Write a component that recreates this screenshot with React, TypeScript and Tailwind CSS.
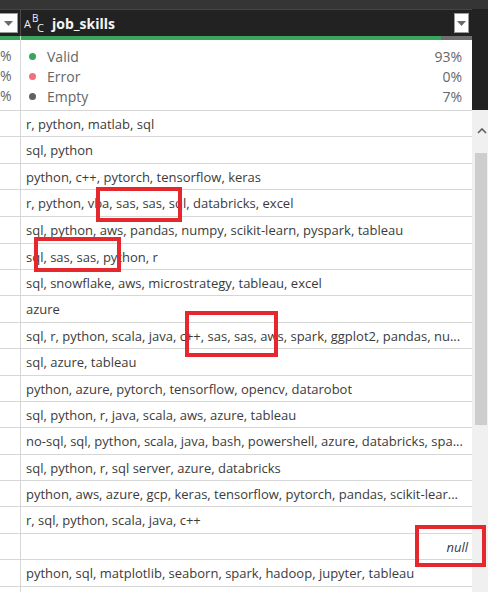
import React from "react";

type Row = { text: string; h: string; isNull?: boolean };

const rows: Row[] = [
  { text: "r, python, matlab, sql", h: "h-[26px]" },
  { text: "sql, python", h: "h-[27px]" },
  { text: "python, c++, pytorch, tensorflow, keras", h: "h-[26px]" },
  { text: "r, python, vba, sas, sas, sql, databricks, excel", h: "h-[27px]" },
  { text: "sql, python, aws, pandas, numpy, scikit-learn, pyspark, tableau", h: "h-[27px]" },
  { text: "sql, sas, sas, python, r", h: "h-[26px]" },
  { text: "sql, snowflake, aws, microstrategy, tableau, excel", h: "h-[26px]" },
  { text: "azure", h: "h-[27px]" },
  { text: "sql, r, python, scala, java, c++, sas, sas, aws, spark, ggplot2, pandas, nu...", h: "h-[26px]" },
  { text: "sql, azure, tableau", h: "h-[27px]" },
  { text: "python, azure, pytorch, tensorflow, opencv, datarobot", h: "h-[26px]" },
  { text: "sql, python, r, java, scala, aws, azure, tableau", h: "h-[26px]" },
  { text: "no-sql, sql, python, scala, java, bash, powershell, azure, databricks, spa...", h: "h-[27px]" },
  { text: "sql, python, r, sql server, azure, databricks", h: "h-[26px]" },
  { text: "python, aws, azure, gcp, keras, tensorflow, pytorch, pandas, scikit-lear...", h: "h-[26px]" },
  { text: "r, sql, python, scala, java, c++", h: "h-[27px]" },
  { text: "", h: "h-[26px]", isNull: true },
  { text: "python, sql, matplotlib, seaborn, spark, hadoop, jupyter, tableau", h: "h-[27px]" },
  { text: "", h: "h-[27px]" },
];

const quality = [
  { label: "Valid", pct: "93%", dot: "bg-[#3aa55d]" },
  { label: "Error", pct: "0%", dot: "bg-[#f0707b]" },
  { label: "Empty", pct: "7%", dot: "bg-[#606060]" },
];

const DropdownBox = ({ className }: { className: string }) => (
  <div
    className={`flex shrink-0 items-center justify-center border border-[#9a9a9a] bg-white ${className}`}
  >
    <svg width="9" height="5" viewBox="0 0 9 5">
      <path d="M0 0h9L4.5 5z" fill="#6a6a6a" />
    </svg>
  </div>
);

const TypeIcon = () => (
  <div className="relative h-[20px] w-[20px] shrink-0 font-['Open_Sans',sans-serif] leading-none text-[#f2f2f2]">
    <span className="absolute left-0 top-[5px] text-[11px]">A</span>
    <span className="absolute left-[8px] top-0 text-[10px]">B</span>
    <span className="absolute left-[13px] top-[9px] text-[11px]">C</span>
  </div>
);

const RedBox = ({ className }: { className: string }) => (
  <div className={`pointer-events-none absolute border-[4px] border-[#e5282d] ${className}`} />
);

export default function App() {
  return (
    <div className="relative h-[592px] w-[488px] overflow-hidden bg-white font-['Open_Sans',sans-serif]">
      <div className="h-[9px] bg-[#353535]" />
      <div className="flex h-[583px] overflow-hidden">
        <div className="flex w-[472px] shrink-0 flex-col">
          {/* column headers */}
          <div className="flex h-[27px] shrink-0 border-t border-[#454545] bg-[#222222]">
            <div className="flex w-[21px] shrink-0 items-center border-r border-[#4a4a4a]">
              <DropdownBox className="-ml-px h-[20px] w-[19px]" />
            </div>
            <div className="flex flex-1 items-center pl-[3px] pr-[3px]">
              <TypeIcon />
              <span className="ml-[8px] text-[14px] font-bold text-[#f5f5f5]">
                job_skills
              </span>
              <DropdownBox className="ml-auto h-[20px] w-[15px]" />
            </div>
          </div>
          <div className="flex h-[4px] shrink-0">
            <div className="w-[20px] bg-[#3aa55d]" />
            <div className="w-px bg-[#d6d6d6]" />
            <div className="w-[420px] bg-[#3aa55d]" />
            <div className="flex-1 bg-[#6e6e6e]" />
          </div>
          {/* quality */}
          <div className="flex h-[71px] shrink-0 border-b border-[#d6d6d6] text-[14px] text-[#666666]">
            <div className="flex w-[21px] shrink-0 flex-col border-r border-[#d6d6d6] pt-[6px]">
              {quality.map((q) => (
                <div key={q.label} className="h-[20px] leading-[20px]">
                  %
                </div>
              ))}
            </div>
            <div className="flex flex-1 flex-col pl-[8px] pr-[10px] pt-[6px]">
              {quality.map((q) => (
                <div key={q.label} className="flex h-[20px] items-center">
                  <span className={`h-[7px] w-[7px] rounded-full ${q.dot}`} />
                  <span className="ml-[11px]">{q.label}</span>
                  <span className="ml-auto">{q.pct}</span>
                </div>
              ))}
            </div>
          </div>
          {/* rows */}
          {rows.map((r, i) => (
            <div key={i} className={`flex shrink-0 border-b border-[#d6d6d6] ${r.h}`}>
              <div className="w-[21px] shrink-0 border-r border-[#d6d6d6]" />
              <div className="flex min-w-0 flex-1 items-center pl-[5px] pr-[8px] pt-[2px] text-[13px] text-[#3b3b3b]">
                {r.isNull ? (
                  <span className="-mr-[4px] ml-auto italic">null</span>
                ) : (
                  <span className="truncate whitespace-nowrap">{r.text}</span>
                )}
              </div>
            </div>
          ))}
        </div>
        {/* scrollbar */}
        <div className="flex w-[16px] shrink-0 flex-col">
          <div className="h-[101px] shrink-0 bg-[#222222]" />
          <div className="flex flex-1 flex-col bg-[#f0f0f0] pl-[3px]">
            <div className="flex h-[43px] shrink-0 items-start pl-[2px] pt-[17px]">
              <svg width="10" height="7" viewBox="0 0 10 7">
                <path d="M1 6L5 2L9 6" stroke="#606060" strokeWidth="1.6" fill="none" />
              </svg>
            </div>
            <div className="h-[272px] w-[12px] shrink-0 bg-[#cdcdcd]" />
          </div>
        </div>
      </div>
      <RedBox className="left-[96px] top-[187px] h-[35px] w-[86px]" />
      <RedBox className="left-[34px] top-[237px] h-[35px] w-[87px]" />
      <RedBox className="left-[185px] top-[311px] h-[46px] w-[93px]" />
      <RedBox className="left-[415px] top-[525px] h-[42px] w-[71px]" />
    </div>
  );
}
